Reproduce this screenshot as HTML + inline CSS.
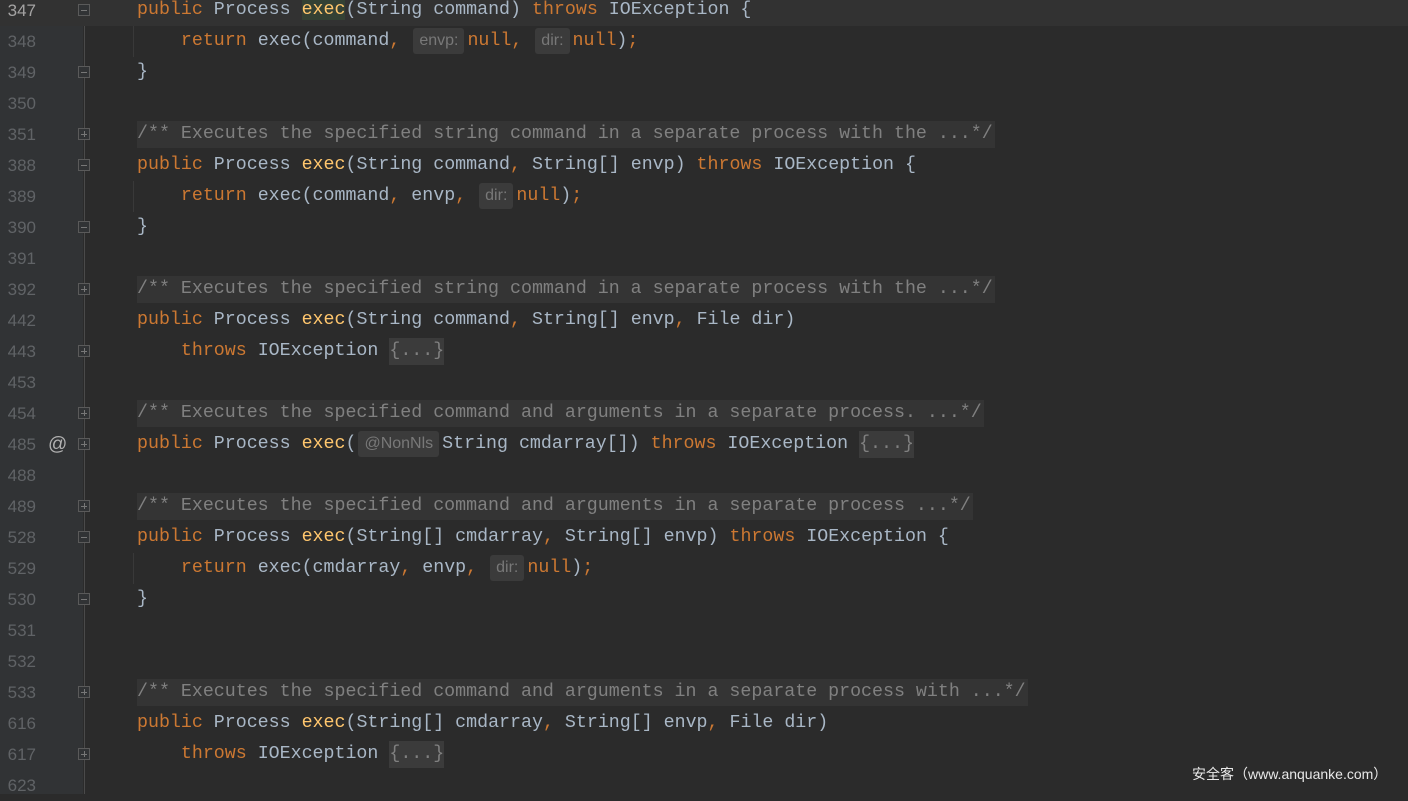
<!DOCTYPE html>
<html><head><meta charset="utf-8"><style>
*{margin:0;padding:0;box-sizing:border-box}
body{width:1408px;height:794px;background:#2b2b2b;overflow:hidden;position:relative;font-family:"Liberation Mono",monospace;font-size:18.3px}
.gut{position:absolute;left:0;top:0;width:83px;height:794px;background:#313335}
.fl{position:absolute;left:84px;top:0;width:1px;height:794px;background:#4a4a4a}
.row{position:absolute;left:0;width:1408px;height:31px;line-height:31px;white-space:pre}
.cur{background:#323232}
.n{position:absolute;left:0;width:36px;text-align:right;color:#606366;font-family:"Liberation Sans",sans-serif;font-size:17px}
.cur .n{color:#a4a3a3}
.c{position:absolute;left:137px;color:#a9b7c6}
.k{color:#cc7832}.m{color:#ffc66d}
.cm{color:#808080;background:#343434;display:inline-block;height:27px;line-height:27px;margin-top:2px;padding-right:2px}
.h{display:inline-block;height:26px;line-height:26px;vertical-align:top;margin-top:2px;background:#3b3b3b;color:#787878;font-family:"Liberation Sans",sans-serif;font-size:16px;border-radius:3px;padding:0 6px;margin-left:2px;margin-right:3px}
.fd{display:inline-block;height:27px;line-height:27px;margin-top:2px;vertical-align:top;background:#3b3b3b;color:#808080}
.b{position:absolute;left:78px;top:9px;width:12px;height:12px;border:1px solid #5a5a5a;background:#313335}
.b::after{content:"";position:absolute;left:2px;top:5px;width:6px;height:1px;background:#777}
.p::before{content:"";position:absolute;left:5px;top:2px;width:1px;height:6px;background:#777}
.at{position:absolute;left:48px;color:#b0b0b0;font-family:"Liberation Sans",sans-serif;font-size:19px}
.ind{position:absolute;left:133px;top:0;width:1px;height:31px;background:#393939}
.wm{position:absolute;left:1192px;top:764px;color:#e8e8e8;font-family:"Liberation Sans","Noto Sans CJK SC",sans-serif;font-size:14px}
</style></head><body>
<div class="gut"></div><div class="fl"></div>
<div class="row cur" style="top:-5px"><span class="n">347</span><span class="b"></span><span class="c"><span class="k">public</span> Process <span class="m" style="background:#344134">exec</span>(String command) <span class="k">throws</span> IOException {</span></div>
<div class="row" style="top:26px"><span class="n">348</span><span class="ind"></span><span class="c">    <span class="k">return</span> exec(command<span class="k">,</span> <span class="h">envp:</span><span class="k">null,</span> <span class="h">dir:</span><span class="k">null</span>)<span class="k">;</span></span></div>
<div class="row" style="top:57px"><span class="n">349</span><span class="b"></span><span class="c">}</span></div>
<div class="row" style="top:88px"><span class="n">350</span></div>
<div class="row" style="top:119px"><span class="n">351</span><span class="b p"></span><span class="c"><span class="cm">/** Executes the specified string command in a separate process with the ...*/</span></span></div>
<div class="row" style="top:150px"><span class="n">388</span><span class="b"></span><span class="c"><span class="k">public</span> Process <span class="m">exec</span>(String command<span class="k">,</span> String[] envp) <span class="k">throws</span> IOException {</span></div>
<div class="row" style="top:181px"><span class="n">389</span><span class="ind"></span><span class="c">    <span class="k">return</span> exec(command<span class="k">,</span> envp<span class="k">,</span> <span class="h">dir:</span><span class="k">null</span>)<span class="k">;</span></span></div>
<div class="row" style="top:212px"><span class="n">390</span><span class="b"></span><span class="c">}</span></div>
<div class="row" style="top:243px"><span class="n">391</span></div>
<div class="row" style="top:274px"><span class="n">392</span><span class="b p"></span><span class="c"><span class="cm">/** Executes the specified string command in a separate process with the ...*/</span></span></div>
<div class="row" style="top:305px"><span class="n">442</span><span class="c"><span class="k">public</span> Process <span class="m">exec</span>(String command<span class="k">,</span> String[] envp<span class="k">,</span> File dir)</span></div>
<div class="row" style="top:336px"><span class="n">443</span><span class="b p"></span><span class="c">    <span class="k">throws</span> IOException <span class="fd">{...}</span></span></div>
<div class="row" style="top:367px"><span class="n">453</span></div>
<div class="row" style="top:398px"><span class="n">454</span><span class="b p"></span><span class="c"><span class="cm">/** Executes the specified command and arguments in a separate process. ...*/</span></span></div>
<div class="row" style="top:429px"><span class="n">485</span><span class="at">@</span><span class="b p"></span><span class="c"><span class="k">public</span> Process <span class="m">exec</span>(<span class="h">@NonNls</span>String cmdarray[]) <span class="k">throws</span> IOException <span class="fd">{...}</span></span></div>
<div class="row" style="top:460px"><span class="n">488</span></div>
<div class="row" style="top:491px"><span class="n">489</span><span class="b p"></span><span class="c"><span class="cm">/** Executes the specified command and arguments in a separate process ...*/</span></span></div>
<div class="row" style="top:522px"><span class="n">528</span><span class="b"></span><span class="c"><span class="k">public</span> Process <span class="m">exec</span>(String[] cmdarray<span class="k">,</span> String[] envp) <span class="k">throws</span> IOException {</span></div>
<div class="row" style="top:553px"><span class="n">529</span><span class="ind"></span><span class="c">    <span class="k">return</span> exec(cmdarray<span class="k">,</span> envp<span class="k">,</span> <span class="h">dir:</span><span class="k">null</span>)<span class="k">;</span></span></div>
<div class="row" style="top:584px"><span class="n">530</span><span class="b"></span><span class="c">}</span></div>
<div class="row" style="top:615px"><span class="n">531</span></div>
<div class="row" style="top:646px"><span class="n">532</span></div>
<div class="row" style="top:677px"><span class="n">533</span><span class="b p"></span><span class="c"><span class="cm">/** Executes the specified command and arguments in a separate process with ...*/</span></span></div>
<div class="row" style="top:708px"><span class="n">616</span><span class="c"><span class="k">public</span> Process <span class="m">exec</span>(String[] cmdarray<span class="k">,</span> String[] envp<span class="k">,</span> File dir)</span></div>
<div class="row" style="top:739px"><span class="n">617</span><span class="b p"></span><span class="c">    <span class="k">throws</span> IOException <span class="fd">{...}</span></span></div>
<div class="row" style="top:770px"><span class="n">623</span></div>
<div class="wm">安全客（www.anquanke.com）</div>
</body></html>
